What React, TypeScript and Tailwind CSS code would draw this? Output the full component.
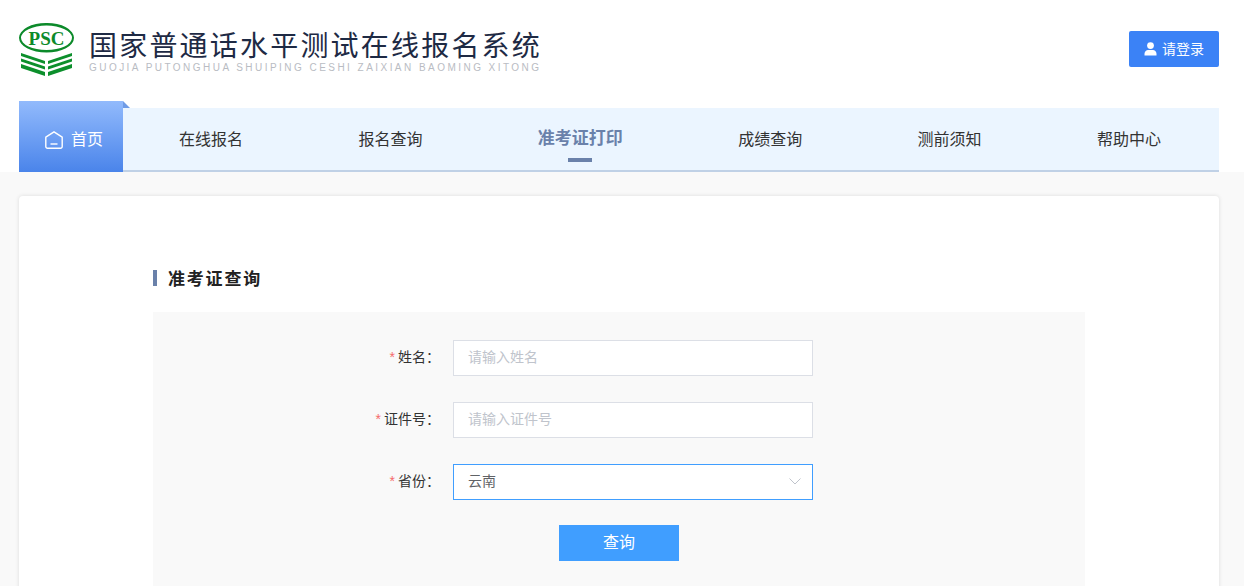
import React from 'react';

const CJK = 'font-["Liberation_Sans","Noto_Sans_CJK_SC",sans-serif]';

const navItems = ['在线报名', '报名查询', '准考证打印', '成绩查询', '测前须知', '帮助中心'];

function Logo() {
  return (
    <svg width="56" height="54" viewBox="0 0 56 54" className="shrink-0">
      <path
        fillRule="evenodd"
        fill="#0c8a2a"
        d="M0 14.800a27.500 14.800 0 1 0 55 0a27.500 14.800 0 1 0-55 0zM2 14.800a25.500 12.200 0 1 1 51 0a25.500 12.200 0 1 1-51 0z"
      />
      <text x="27.500" y="22" textAnchor="middle" fontFamily="Liberation Serif, serif" fontWeight="700" fontSize="19" fill="#0c8a2a">PSC</text>
      <g fill="#0c8f2c">
        <path d="M2 30l24 8v3L2 33z" />
        <path d="M2 35.500l24 8v3L2 38.500z" />
        <path d="M2 41l24 8v4L2 45z" />
        <path d="M29 38l24-8v3l-24 8z" />
        <path d="M29 43.500l24-8v3l-24 8z" />
        <path d="M29 49l24-8v4l-24 8z" />
      </g>
    </svg>
  );
}

function HomeIcon() {
  return (
    <svg width="18" height="18" viewBox="0 0 18 18" fill="none" stroke="#fff" strokeWidth="1.400" strokeLinejoin="round">
      <path d="M0.800 6.200L9 0.800l8.200 5.400v9.300a1.700 1.700 0 0 1-1.700 1.700h-13a1.700 1.700 0 0 1-1.700-1.700z" />
      <path d="M5.500 13h7" />
    </svg>
  );
}

function UserIcon() {
  return (
    <svg width="13" height="14" viewBox="0 0 13 14" fill="#fff">
      <circle cx="6.500" cy="3.600" r="3.400" />
      <path d="M0.500 13.500v-1.800c0-2.300 2-3.700 3.500-3.700h5c1.500 0 3.500 1.400 3.500 3.700v1.800z" />
    </svg>
  );
}

function Field({ label, placeholder }: { label: string; placeholder: string }) {
  return (
    <div className="flex h-9 items-center">
      <label className="w-[300px] pr-[13px] pb-[2px] text-right text-sm text-[#333]">
        <span className="mr-[3px] text-[#f56c6c]">*</span>
        {label}：
      </label>
      <input
        readOnly
        placeholder={placeholder}
        className="h-9 w-[360px] border border-[#dcdfe6] bg-white px-[14px] pb-[2px] text-sm text-[#606266] outline-none placeholder:text-[#c0c4cc]"
      />
    </div>
  );
}

export default function App() {
  return (
    <div className={`h-[586px] overflow-hidden bg-[#f9f9f9] ${CJK}`}>
      <div className="h-[172px] bg-white">
        <div className="ml-[19px] w-[1200px]">
          <div className="flex h-[101px] justify-between">
            <div className="flex pt-[23px]">
              <Logo />
              <div className="ml-[14px] pt-[8px]">
                <div className="h-[32px] text-[28px] leading-[32px] font-normal tracking-[2.2px] whitespace-nowrap text-[#1e2a44]">
                  国家普通话水平测试在线报名系统
                </div>
                <div className="-mt-[1px] text-[10px] leading-[12px] tracking-[2.46px] whitespace-nowrap text-[#b9bcc3]">
                  GUOJIA PUTONGHUA SHUIPING CESHI ZAIXIAN BAOMING XITONG
                </div>
              </div>
            </div>
            <div className="pt-[31px]">
              <button className="flex h-9 w-[90px] items-center justify-center gap-[5px] rounded-[2px] bg-[#3b82f6] pb-[1px] text-sm text-white">
                <UserIcon />
                请登录
              </button>
            </div>
          </div>
          <div className="relative flex h-[71px]">
            <div className="flex h-[71px] w-[104px] items-center gap-2 bg-gradient-to-b from-[#92bafc] to-[#4a84ea] pt-[6px] pl-[26px] text-base text-white">
              <HomeIcon />
              首页
            </div>
            <div className="absolute top-0 left-[104px] h-[7px] w-[7px] bg-[#6f9be6] [clip-path:polygon(0_0,100%_100%,0_100%)]" />
            <div className="mt-[7px] flex h-[64px] flex-1 items-center justify-between border-b-2 border-[#c0d1e6] bg-[#ebf5ff] pt-[1px] pr-[58px] pl-[56px] text-base text-[#333]">
              {navItems.map((item, i) =>
                i === 2 ? (
                  <div key={item} className="relative -mt-[2px] text-[17px] font-bold text-[#6a81aa]">
                    {item}
                    <div className="absolute top-[32px] left-1/2 h-1 w-6 -translate-x-1/2 bg-[#6a81aa]" />
                  </div>
                ) : (
                  <div key={item}>{item}</div>
                ),
              )}
            </div>
          </div>
        </div>
      </div>

      <div className="mt-6 ml-[19px] h-[500px] w-[1200px] rounded-[4px] bg-white pt-[74px] pl-[134px] shadow-[0_0_4px_rgba(0,0,0,0.12)]">
        <div className="flex h-4 items-center border-l-4 border-[#6a81aa] pt-[3px] pl-[11px] text-[17px] font-bold tracking-[1.8px] text-[#222]">
          准考证查询
        </div>
        <div className="mt-[26px] flex h-[300px] w-[932px] flex-col gap-[26px] bg-[#f9f9f9] pt-[28px]">
          <Field label="姓名" placeholder="请输入姓名" />
          <Field label="证件号" placeholder="请输入证件号" />
          <div className="flex h-9 items-center">
            <label className="w-[300px] pr-[13px] pb-[2px] text-right text-sm text-[#333]">
              <span className="mr-[3px] text-[#f56c6c]">*</span>
              省份：
            </label>
            <div className="flex h-9 w-[360px] items-center justify-between border border-[#409eff] bg-white pr-[11px] pb-[2px] pl-[14px] text-sm text-[#606266]">
              云南
              <svg width="12" height="7" viewBox="0 0 12 7" fill="none" stroke="#c0c4cc" strokeWidth="1">
                <path d="M0.500 0.500L6 6l5.500-5.500" />
              </svg>
            </div>
          </div>
          <button className="ml-[406px] -mt-[1px] h-9 w-[120px] bg-[#409eff] text-base text-white">查询</button>
        </div>
      </div>
    </div>
  );
}
